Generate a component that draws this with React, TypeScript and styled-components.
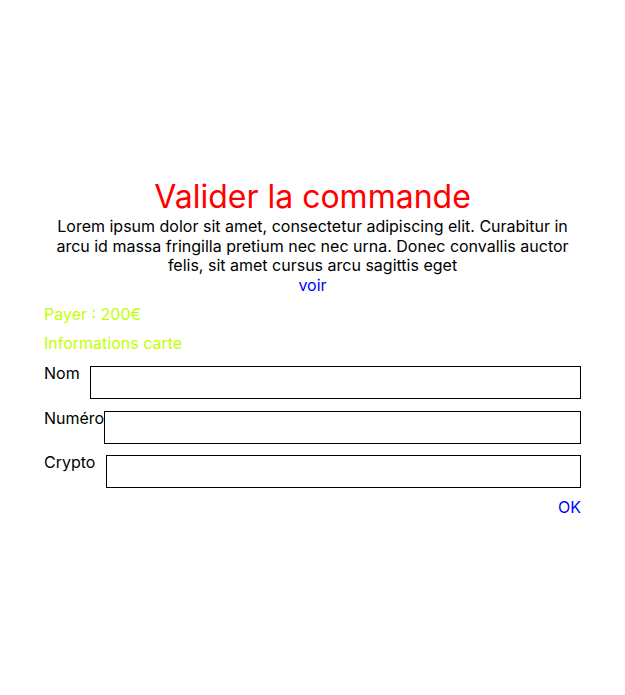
import styled, { createGlobalStyle } from 'styled-components';

const GlobalStyle = createGlobalStyle`
    body {
        margin: 0;
        font-family: Inter, 'Liberation Sans', sans-serif;
        background: #fff;
        color: #000;
    }
`;

const Page = styled.div`
    min-height: 100vh;
    display: flex;
    align-items: center;
    justify-content: center;
`;

const Panel = styled.div`
    width: 537px;
    display: flex;
    flex-direction: column;
`;

const Title = styled.h1`
    margin: 0;
    font-size: 32px;
    font-weight: 400;
    line-height: 40px;
    color: #ff0000;
    text-align: center;
`;

const Intro = styled.p`
    margin: 0;
    font-size: 16px;
    line-height: 19.5px;
    text-align: center;
`;

const Link = styled.a`
    align-self: center;
    font-size: 16px;
    line-height: 19.5px;
    color: #0000ff;
    text-decoration: none;
    cursor: pointer;
`;

const Hint = styled.div`
    margin-top: 10px;
    font-size: 16px;
    line-height: 19.5px;
    color: #bfff00;
    & + & {
        margin-top: 9px;
    }
`;

const Form = styled.form`
    margin-top: 13px;
    display: flex;
    flex-direction: column;
    gap: 11.5px;
`;

const Row = styled.label<{ $gap: number }>`
    display: flex;
    align-items: flex-start;
    gap: ${(p) => p.$gap}px;
    font-size: 16px;
    line-height: 14px;
`;

const Field = styled.input`
    flex: 1;
    height: 33px;
    box-sizing: border-box;
    border: 1px solid #000;
    border-radius: 0;
    padding: 0 6px;
    font: inherit;
    line-height: normal;
    outline: none;
`;

const Footer = styled.div`
    margin-top: 10px;
    display: flex;
    justify-content: flex-end;
`;

const OkButton = styled.button`
    border: none;
    background: none;
    padding: 0;
    font-family: inherit;
    font-size: 16px;
    line-height: 19.5px;
    color: #0000ff;
    cursor: pointer;
`;

const fields = [
    { label: 'Nom', gap: 10 },
    { label: 'Numéro', gap: 0 },
    { label: 'Crypto', gap: 11 },
];

export default function App() {
    return (
        <>
            <GlobalStyle />
            <Page>
                <Panel>
                    <Title>Valider la commande</Title>
                    <Intro>
                        Lorem ipsum dolor sit amet, consectetur adipiscing elit. Curabitur in arcu id massa fringilla
                        pretium nec nec urna. Donec convallis auctor felis, sit amet cursus arcu sagittis eget
                    </Intro>
                    <Link>voir</Link>
                    <Hint>Payer : 200€</Hint>
                    <Hint>Informations carte</Hint>
                    <Form onSubmit={(e) => e.preventDefault()}>
                        {fields.map((f) => (
                            <Row key={f.label} $gap={f.gap}>
                                {f.label}
                                <Field type="text" />
                            </Row>
                        ))}
                    </Form>
                    <Footer>
                        <OkButton type="button">OK</OkButton>
                    </Footer>
                </Panel>
            </Page>
        </>
    );
}
